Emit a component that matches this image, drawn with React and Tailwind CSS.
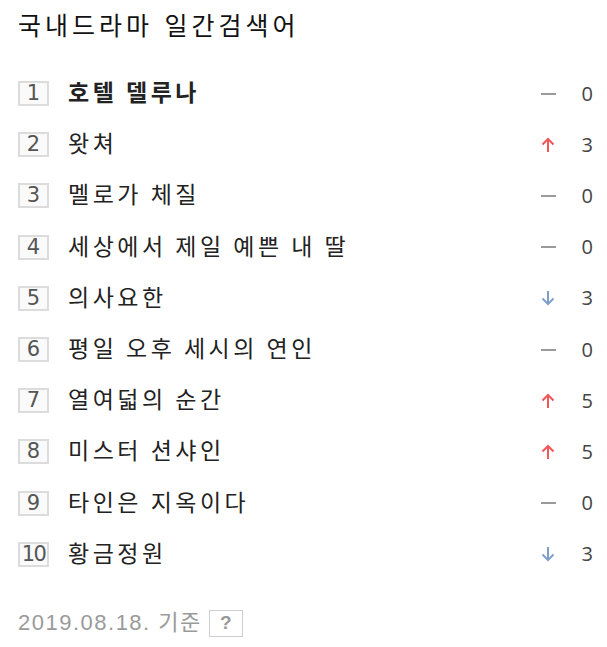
import React from "react";

const items = [
  { t: "호텔 델루나", d: "same", n: 0, bold: true },
  { t: "왓쳐", d: "up", n: 3 },
  { t: "멜로가 체질", d: "same", n: 0 },
  { t: "세상에서 제일 예쁜 내 딸", d: "same", n: 0 },
  { t: "의사요한", d: "down", n: 3 },
  { t: "평일 오후 세시의 연인", d: "same", n: 0 },
  { t: "열여덟의 순간", d: "up", n: 5 },
  { t: "미스터 션샤인", d: "up", n: 5 },
  { t: "타인은 지옥이다", d: "same", n: 0 },
  { t: "황금정원", d: "down", n: 3 },
];

function Indicator({ d }) {
  if (d === "same") {
    return <div className="w-[15px] h-[2px] bg-[#9a9a9a]" />;
  }
  if (d === "up") {
    return (
      <svg width="16" height="18" viewBox="0 0 16 18" fill="none">
        <path d="M8 16V3M2.5 8.5L8 3l5.5 5.5" stroke="#f3565a" strokeWidth="2" />
      </svg>
    );
  }
  return (
    <svg width="16" height="18" viewBox="0 0 16 18" fill="none">
      <path d="M8 2v13M2.5 9.5L8 15l5.5-5.5" stroke="#7f9fc8" strokeWidth="2" />
    </svg>
  );
}

export default function App() {
  const kr = { fontFamily: '"Noto Sans CJK KR", "Noto Sans", sans-serif' };
  return (
    <div className="w-[607px] h-[647px] bg-white pl-[18px] pr-[14px]">
      <div className="h-[68px] flex items-start pt-[6px]">
        <div className="text-[25px] leading-[36px] tracking-[4px] [word-spacing:2px] text-[#111]" style={kr}>
          국내드라마 일간검색어
        </div>
      </div>
      <div className="flex flex-col">
        {items.map((it, i) => (
          <div key={i} className="h-[51.2px] flex items-center">
            <div
              className="w-[31px] h-[25px] border-2 border-[#dcdcdc] bg-[#fafafa] flex items-center justify-center text-[21px] text-[#555] leading-none"
              style={{ fontFamily: '"DejaVu Sans", sans-serif' }}
            >
              <span className={i === 9 ? "tracking-[-1.5px]" : ""}>{i + 1}</span>
            </div>
            <div
              className={`ml-[19px] flex-1 pb-[4px] text-[23px] leading-none tracking-[3.5px] text-[#222] ${it.bold ? "font-bold" : ""}`}
              style={kr}
            >
              {it.t}
            </div>
            <div className="w-[20px] flex items-center justify-center">
              <Indicator d={it.d} />
            </div>
            <div
              className="w-[35px] text-right text-[20px] text-[#444] leading-none"
              style={{ fontFamily: '"Open Sans", sans-serif' }}
            >
              {it.n}
            </div>
          </div>
        ))}
      </div>
      <div className="mt-[30px] flex items-center">
        <span
          className="text-[22px] tracking-[1.5px] text-[#9a9a9a] leading-none"
          style={{ fontFamily: '"Liberation Sans", "Noto Sans CJK KR", sans-serif' }}
        >
          2019.08.18. 기준
        </span>
        <div className="ml-[7px] w-[34px] h-[27px] border border-[#cfcfcf] flex items-center justify-center text-[19px] font-bold text-[#999]" style={{ fontFamily: '"Liberation Sans", sans-serif' }}>
          ?
        </div>
      </div>
    </div>
  );
}
